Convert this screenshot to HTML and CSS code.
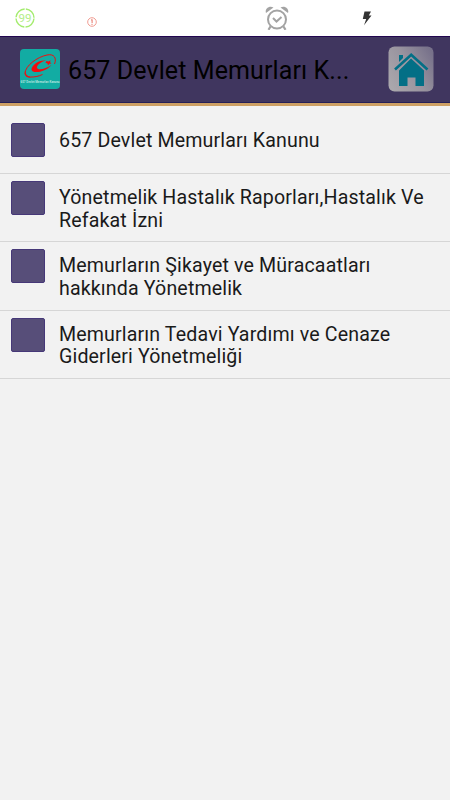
FILE: index.html
```html
<!DOCTYPE html>
<html lang="tr">
<head>
    <meta charset="UTF-8">
    <meta name="viewport" content="width=device-width, initial-scale=1.0">
    <title>657 Devlet Memurları Kanunu</title>
    <link rel="stylesheet" href="styles.css">
</head>
<body>
    <div class="status-bar">
        <svg class="battery" viewBox="0 0 20 20">
            <circle cx="10" cy="10" r="9" fill="none" stroke="#a5ec70" stroke-width="1.4" stroke-dasharray="12.9 1.24" stroke-dashoffset="-0.6"/>
            <text x="10" y="14" text-anchor="middle" textLength="13" lengthAdjust="spacingAndGlyphs">99</text>
        </svg>
        <svg class="warning" viewBox="0 0 10 10">
            <circle cx="5" cy="5" r="4.3" fill="none" stroke="#ee9186" stroke-width="0.9"/>
            <path d="M4.2 3.2L5.1 2.4V6M5 6.8V7.9" fill="none" stroke="#e87468" stroke-width="1"/>
        </svg>
        <svg class="alarm" viewBox="0 0 24 24" fill="none" stroke="#a3a3a3">
            <circle cx="12" cy="13.5" r="9" stroke-width="2"/>
            <path d="M8 12L11.5 15.5L16.5 11" stroke-width="2"/>
            <path d="M1 7C-0.5 3 4 -1 8.5 1.5ZM23 7C24.500 3 20 -1 15.500 1.500Z" fill="#a3a3a3" stroke="none"/>
            <path d="M5.500 20.500L3.500 23.800M18.500 20.500L20.500 23.800" stroke-width="2.200"/>
        </svg>
        <svg class="bolt" viewBox="0 0 10 15">
            <path d="M2.500 0.500H9L6.800 4.600H9.500L2 14.300L4.200 8H0.800Z" fill="#333"/>
        </svg>
    </div>

    <div class="header">
        <svg class="logo" viewBox="0 0 40 40">
            <rect width="40" height="40" rx="4" fill="#12aca3"/>
            <path d="M34.500 15C37 9 34 4.500 27 6C17 8 5 17 5 24.500C5 28.500 14 29.500 22.500 25.500" fill="none" stroke="#f20d0d" stroke-width="1"/>
            <path d="M5 22C4 27 7 29 11 28.600C7.500 27.500 5.500 25.500 5 22Z" fill="#f20d0d"/>
            <path d="M26 11.500C19 10.500 11.500 16 11.500 20.500C12 25.500 26 23 31.500 16C26 20 18.500 21.500 17 19C16.200 16.500 21 12.500 26 11.500Z" fill="#f20d0d"/>
            <path d="M26.500 12L28.500 12.600L30.500 11.200L30.100 13.300L31.500 14.600L29.300 14.800L28 16.400L27.500 14.400L25.500 13.700Z" fill="#f20d0d"/>
            <text x="20" y="34.200" text-anchor="middle" textLength="39" lengthAdjust="spacingAndGlyphs">657 Devlet Memurları Kanunu</text>
        </svg>
        <h1 class="title">657 Devlet Memurları K...</h1>
        <svg class="home" viewBox="0 0 46 46">
            <defs>
                <linearGradient id="shine" x1="0" y1="0.8" x2="1" y2="0.2">
                    <stop offset="0" stop-color="#aaa7ac"/>
                    <stop offset="0.5" stop-color="#99949f"/>
                    <stop offset="1" stop-color="#77718a"/>
                </linearGradient>
            </defs>
            <rect x="0.5" y="0.5" width="45" height="45" rx="6" fill="url(#shine)"/>
            <path d="M11 9H15V12L11 16ZM23 12.600L36 24.500V40H27.500V31.500H19.500V40H11V24.500Z" fill="#036f86"/>
            <path d="M7 23.500L23.200 8.800L39.500 23.500" fill="none" stroke="#036f86" stroke-width="2.6"/>
            <path d="M9 24.700L23.200 11.600L37.500 24.700" fill="none" stroke="#9c98a3" stroke-width="0.8"/>
        </svg>
    </div>

    <ul class="list">
        <li class="item single">
            <span class="box"></span>
            <span class="label">657 Devlet Memurları Kanunu</span>
        </li>
        <li class="item">
            <span class="box"></span>
            <span class="label">Yönetmelik Hastalık Raporları,Hastalık Ve<br>Refakat İzni</span>
        </li>
        <li class="item">
            <span class="box"></span>
            <span class="label">Memurların Şikayet ve Müracaatları<br>hakkında Yönetmelik</span>
        </li>
        <li class="item">
            <span class="box"></span>
            <span class="label">Memurların Tedavi Yardımı ve Cenaze<br>Giderleri Yönetmeliği</span>
        </li>
    </ul>
</body>
</html>
```
FILE: styles.css
```css
* {
    box-sizing: border-box;
}
body {
    margin: 0;
    min-height: 800px;
    background-color: #f2f2f2;
    font-family: Roboto, sans-serif;
    color: #1a1a1a;
}
.status-bar {
    display: flex;
    align-items: flex-start;
    height: 36px;
    background-color: #fff;
}
.battery {
    width: 20px;
    height: 20px;
    margin: 8px 0 0 15px;
}
.battery text {
    font-size: 11px;
    fill: #b4ee8a;
}
.warning {
    width: 10px;
    height: 10px;
    margin: 17px 0 0 52px;
}
.alarm {
    width: 24px;
    height: 24px;
    margin: 6px 0 0 168px;
}
.bolt {
    width: 10px;
    height: 15px;
    margin: 11px 0 0 73px;
}
.header {
    display: flex;
    align-items: center;
    height: 70px;
    padding: 0 16px 3px 20px;
    background-color: #40365f;
    border-top: 1px solid #220650;
    border-bottom: 3px solid #cda064;
    box-shadow: inset 0 -1px 0 #252058;
}
.logo {
    width: 40px;
    height: 40px;
}
.logo text {
    font-size: 2.6px;
    font-weight: bold;
    fill: #b5e3df;
}
.title {
    flex: 1;
    margin: 0 0 0 8px;
    padding-top: 3px;
    font-size: 25px;
    font-weight: 400;
    letter-spacing: 0.1px;
    white-space: nowrap;
    color: #000;
}
.home {
    width: 46px;
    height: 46px;
}
.list {
    margin: 0;
    padding: 0;
    list-style: none;
}
.item {
    display: flex;
    align-items: flex-start;
    height: 68.4px;
    padding: 7px 11px 0;
    border-bottom: 1px solid #d6d6d6;
}
.single {
    align-items: center;
    height: 68px;
    padding-top: 1px;
}
.box {
    flex-shrink: 0;
    width: 34px;
    height: 34px;
    background-color: #574e79;
    border: 1px solid #463878;
    border-radius: 2px;
}
.label {
    margin-left: 14px;
    padding-top: 6px;
    font-size: 19.6px;
    line-height: 22.5px;
    letter-spacing: 0.14px;
    white-space: nowrap;
}
.single .label {
    padding-top: 2px;
}
```
